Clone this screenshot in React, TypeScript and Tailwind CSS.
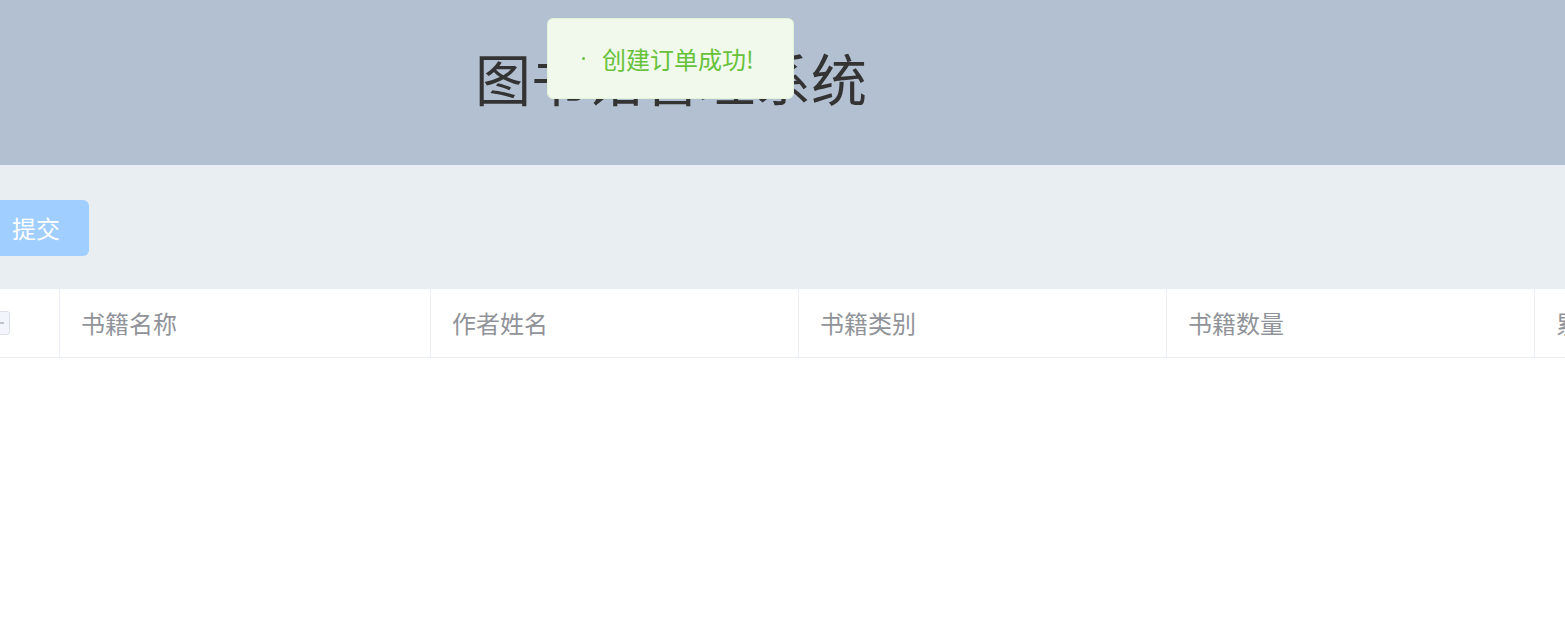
export default function App() {
    const columns = ['书籍名称', '作者姓名', '书籍类别', '书籍数量'];

    return (
        <div className="relative w-full h-[621px] overflow-hidden bg-white"
            style={{ fontFamily: '"Noto Sans CJK SC", "Liberation Sans", sans-serif' }}>
            <header className="h-[165px] bg-[#b3c0d1] flex items-center pl-[475px] pb-[11px]">
                <h1 className="text-[56px] leading-none text-[#333]">图书馆管理系统</h1>
            </header>

            <main className="h-[124px] bg-[#e9eef3] pt-[35px]">
                <button type="button" disabled
                    className="ml-[-30px] h-[56px] w-[119px] pl-[42px] text-left rounded-[6px] bg-[#a0cfff] text-white text-[24px] leading-none">
                    提交
                </button>
            </main>

            <div className="flex h-[69px] border-b border-[#ebeef5] bg-white">
                <div className="w-[60px] shrink-0 border-r border-[#ebeef5] flex items-center">
                    <span className="ml-[-14px] w-[24px] h-[24px] rounded-[3px] border border-[#dcdfe6] bg-[#f2f6fc] flex items-center justify-center">
                        <span className="w-[12px] h-[2px] bg-[#c0c4cc]" />
                    </span>
                </div>
                {columns.map((c, i) => (
                    <div key={c}
                        className={`shrink-0 border-r border-[#ebeef5] flex items-center pl-[21px] text-[24px] text-[#909399] ${i === 0 ? 'w-[371px]' : 'w-[368px]'}`}>
                        {c}
                    </div>
                ))}
                <div className="shrink-0 flex items-center pl-[21px] text-[24px] text-[#909399] whitespace-nowrap">
                    累计借阅
                </div>
            </div>

            <div role="alert"
                className="absolute left-[547px] top-[18px] w-[247px] h-[81px] rounded-[6px] border border-[#e1f3d8] bg-[#f0f9eb] flex items-center pl-[34px]">
                <span className="w-[3px] h-[3px] rounded-full bg-[#67c23a]" />
                <span className="ml-[17px] text-[24px] leading-none text-[#67c23a]">创建订单成功!</span>
            </div>
        </div>
    )
}
